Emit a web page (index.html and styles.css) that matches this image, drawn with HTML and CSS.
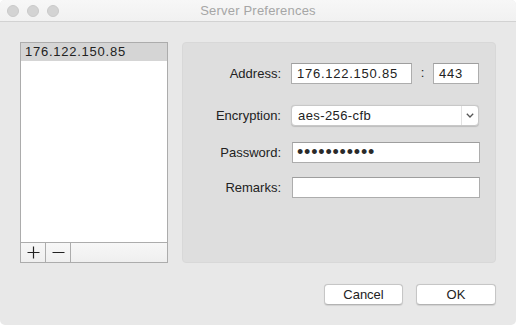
FILE: index.html
```html
<!DOCTYPE html>
<html lang="en">
<head>
  <meta charset="UTF-8" />
  <title>Server Preferences</title>
  <link rel="stylesheet" href="styles.css">
</head>
<body>

<div class="window">
  <div class="titlebar">
    <div class="lights">
      <span class="light"></span>
      <span class="light"></span>
      <span class="light"></span>
    </div>
    <div class="title">Server Preferences</div>
  </div>

  <div class="content">
    <div class="servers">
      <ul class="server-list">
        <li class="selected">176.122.150.85</li>
      </ul>
      <div class="list-bar">
        <button class="bar-btn" title="Add">
          <svg width="13" height="13" viewBox="0 0 13 13"><path d="M6.5 0.5v12M0.5 6.5h12" stroke="#222" stroke-width="1.2" fill="none"/></svg>
        </button>
        <button class="bar-btn" title="Remove">
          <svg width="13" height="13" viewBox="0 0 13 13"><path d="M0.5 6.5h12" stroke="#222" stroke-width="1.2" fill="none"/></svg>
        </button>
        <div class="bar-rest"></div>
      </div>
    </div>

    <div class="panel">
      <div class="row row-address">
        <label>Address:</label>
        <div class="fields">
          <div class="field field-host">176.122.150.85</div>
          <span class="colon">:</span>
          <div class="field field-port">443</div>
        </div>
      </div>
      <div class="row row-encryption">
        <label>Encryption:</label>
        <div class="select">
          <span class="select-value">aes-256-cfb</span>
          <span class="select-arrow">
            <svg width="8" height="5" viewBox="0 0 8 5"><path d="M0.8 0.8l3.2 3.2l3.2-3.2" stroke="#555" stroke-width="1.3" fill="none"/></svg>
          </span>
        </div>
      </div>
      <div class="row row-password">
        <label>Password:</label>
        <div class="field field-wide dots">&bull;&bull;&bull;&bull;&bull;&bull;&bull;&bull;&bull;&bull;&bull;</div>
      </div>
      <div class="row row-remarks">
        <label>Remarks:</label>
        <div class="field field-wide"></div>
      </div>
    </div>
  </div>

  <div class="actions">
    <button class="push">Cancel</button>
    <button class="push push-ok">OK</button>
  </div>
</div>

</body>
</html>
```

FILE: styles.css
```css
* {
  box-sizing: border-box;
  margin: 0;
  padding: 0;
}
body {
  font-family: 'Liberation Sans', Arial, sans-serif;
  font-size: 13px;
  color: #222;
  background: #fff;
}
.window {
  width: 516px;
  height: 325px;
  background: #e8e8e8;
  border-radius: 5px;
  overflow: hidden;
}
.titlebar {
  position: relative;
  height: 22px;
  background: linear-gradient(#f7f7f7, #f1f1f1);
  border-bottom: 1px solid #d2d2d2;
  display: flex;
  align-items: center;
  justify-content: center;
}
.lights {
  position: absolute;
  left: 7px;
  top: 5px;
  display: flex;
  gap: 8px;
}
.light {
  width: 12px;
  height: 12px;
  border-radius: 50%;
  background: #d3d3d3;
  border: 1px solid #c9c9c9;
}
.title {
  color: #a6a6a6;
  font-size: 13px;
  letter-spacing: 0.2px;
}
.content {
  display: flex;
  gap: 14px;
  padding: 20px 20px 0 20px;
}
.servers {
  width: 148px;
  height: 221px;
  border: 1px solid #acacac;
  background: #fff;
  display: flex;
  flex-direction: column;
}
.server-list {
  list-style: none;
  flex: 1;
}
.server-list li {
  height: 18px;
  line-height: 18px;
  padding-left: 4px;
  font-size: 13px;
  letter-spacing: 0.75px;
}
.server-list li.selected {
  background: #d5d5d5;
}
.list-bar {
  height: 20px;
  border-top: 1px solid #acacac;
  display: flex;
  background: linear-gradient(#f7f7f7, #efefef);
}
.bar-btn {
  width: 25px;
  border: none;
  border-right: 1px solid #acacac;
  background: transparent;
  display: flex;
  align-items: center;
  justify-content: center;
}
.bar-rest {
  flex: 1;
}
.panel {
  width: 314px;
  height: 221px;
  background: #dedede;
  border: 1px solid #d8d8d8;
  border-radius: 4px;
  padding-top: 20px;
}
.row {
  display: flex;
  align-items: center;
  height: 21px;
}
.row label {
  width: 98px;
  text-align: right;
  margin-right: 10px;
  color: #222;
}
.row-encryption {
  margin-top: 21px;
}
.row-password {
  margin-top: 16px;
}
.row-remarks {
  margin-top: 14px;
}
.fields {
  display: flex;
  align-items: center;
}
.field {
  height: 21px;
  background: #fff;
  border: 1px solid #adadad;
  border-top-color: #9e9e9e;
  padding-left: 5px;
  line-height: 19px;
  letter-spacing: 0.75px;
}
.field-host {
  width: 121px;
}
.colon {
  width: 21px;
  text-align: center;
  margin-top: -3px;
}
.field-port {
  width: 46px;
}
.field-wide {
  width: 188px;
  margin-left: 1px;
}
.dots {
  font-size: 18px;
  line-height: 18px;
  letter-spacing: 0.8px;
  color: #2a2a2a;
  padding-left: 4px;
}
.select {
  width: 188px;
  height: 21px;
  background: #fff;
  border: 1px solid #c8c8c8;
  border-radius: 4px;
  box-shadow: 0 0.5px 1px rgba(0, 0, 0, 0.15);
  display: flex;
  align-items: center;
}
.select-value {
  flex: 1;
  padding-left: 6px;
  letter-spacing: 0.4px;
}
.select-arrow {
  width: 17px;
  height: 100%;
  border-left: 1px solid #e2e2e2;
  display: flex;
  align-items: center;
  justify-content: center;
}
.actions {
  display: flex;
  justify-content: flex-end;
  gap: 13px;
  padding: 21px 20px 0 0;
}
.push {
  width: 79px;
  height: 21px;
  background: #fff;
  border: 1px solid #c6c6c6;
  border-bottom-color: #b3b3b3;
  border-radius: 4px;
  font-family: inherit;
  font-size: 13px;
  color: #222;
  box-shadow: 0 0.5px 1px rgba(0, 0, 0, 0.1);
}
.push-ok {
  width: 80px;
}
```
